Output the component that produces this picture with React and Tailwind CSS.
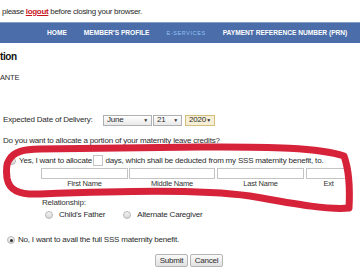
import React from "react";

function Radio({ checked }) {
  return (
    <span className="flex-none w-[8px] h-[8px] rounded-full border border-[#b8b8b8] bg-gradient-to-b from-[#f4f4f4] to-[#d6d6d6] flex items-center justify-center">
      {checked ? <span className="w-[3px] h-[3px] rounded-full bg-[#333]" /> : null}
    </span>
  );
}

function Select({ value, w, yellow }) {
  return (
    <div
      className={
        "h-[11px] flex items-center justify-between px-[3px] border text-[8px] tracking-[-0.2px] " +
        w +
        (yellow
          ? " border-[#d2bf7e] bg-[#f6efd6]"
          : " border-[#b0b0b0] bg-gradient-to-b from-[#ffffff] to-[#e9e9e9]")
      }
    >
      <span>{value}</span>
      <span className="text-[5px] leading-none">▼</span>
    </div>
  );
}

export default function App() {
  return (
    <div className="relative w-[360px] h-[279px] overflow-hidden bg-white text-[#2b2b2b] font-['Liberation_Sans',Arial,sans-serif]">
      {/* top line */}
      <div className="h-[22px] flex items-center pt-[1px] pl-[2px] text-[8px] tracking-[-0.3px] whitespace-nowrap">
        please&nbsp;<span className="font-bold text-[#c8141e] underline">logout</span>&nbsp;before closing your browser.
      </div>

      {/* nav */}
      <div className="h-[21px] bg-[#4b6daa] border-t border-[#86a0cc] flex items-center pl-[47px] gap-[17px] text-white font-bold text-[6.6px] whitespace-nowrap">
        <span>HOME</span>
        <span>MEMBER'S PROFILE</span>
        <span className="font-normal text-[5.5px] text-[#8fc3f2] tracking-[0.6px]">E-SERVICES</span>
        <span>PAYMENT REFERENCE NUMBER (PRN)</span>
      </div>

      <div className="h-[26px] flex items-center text-[10px] font-bold tracking-[-0.4px] text-[#111]">
        tion
      </div>
      <div className="h-[18px] flex items-center text-[7.5px] tracking-[-0.2px]">ANTE</div>

      <div className="mt-[27px] h-[12px] flex items-center pl-[3px] text-[8px] tracking-[-0.2px] whitespace-nowrap">
        <span className="flex-none w-[100px]">Expected Date of Delivery:</span>
        <Select value="June" w="w-[49px]" />
        <div className="ml-[1px]">
          <Select value="21" w="w-[29px]" />
        </div>
        <div className="ml-[3px]">
          <Select value="2020" w="w-[30px]" yellow />
        </div>
      </div>

      <div className="mt-[8px] h-[13px] flex items-center pl-[3px] text-[8px] tracking-[-0.2px] whitespace-nowrap">
        Do you want to allocate a portion of your maternity leave credits?
      </div>

      <div className="mt-[8px] h-[11px] flex items-center pl-[8px] text-[8px] tracking-[-0.2px] whitespace-nowrap">
        <Radio />
        <span className="ml-[3px]">Yes, I want to allocate</span>
        <span className="ml-[1.5px] flex-none w-[10px] h-[11px] border border-[#c4c4c4] bg-white" />
        <span className="ml-[2px]">days, which shall be deducted from my SSS maternity benefit, to.</span>
      </div>

      <div className="mt-[2px] h-[11px] flex pl-[41px]">
        <span className="flex-none w-[87px] h-[11px] border border-[#c4c4c4]" />
        <span className="ml-[1px] flex-none w-[86px] h-[11px] border border-[#c4c4c4]" />
        <span className="ml-[2px] flex-none w-[87px] h-[11px] border border-[#c4c4c4]" />
        <span className="ml-[2px] flex-none w-[45px] h-[11px] border border-[#c4c4c4]" />
      </div>
      <div className="h-[10px] flex items-center pl-[41px] text-[7.5px] tracking-[-0.2px] text-[#333] whitespace-nowrap">
        <span className="flex-none w-[87px] text-center">First Name</span>
        <span className="ml-[1px] flex-none w-[86px] text-center">Middle Name</span>
        <span className="ml-[2px] flex-none w-[87px] text-center">Last Name</span>
        <span className="ml-[2px] flex-none w-[45px] text-center">Ext</span>
      </div>

      <div className="mt-[8px] h-[11px] flex items-center pl-[42px] text-[8px] tracking-[-0.2px] text-[#333]">
        Relationship:
      </div>
      <div className="mt-[1px] h-[12px] flex items-center pl-[45px] text-[8px] tracking-[-0.2px] whitespace-nowrap">
        <Radio />
        <span className="ml-[6px]">Child's Father</span>
        <span className="ml-[18px]">
          <Radio />
        </span>
        <span className="ml-[6px]">Alternate Caregiver</span>
      </div>

      <div className="mt-[13px] h-[12px] flex items-center pl-[7px] text-[8px] tracking-[-0.2px] whitespace-nowrap">
        <Radio checked />
        <span className="ml-[3px]">No, I want to avail the full SSS maternity benefit.</span>
      </div>

      <div className="mt-[8px] h-[13px] flex pl-[155px] gap-[2px] text-[8px] tracking-[-0.2px]">
        <button className="w-[33px] h-[13px] border border-[#b5b5b5] rounded-[2px] bg-gradient-to-b from-[#fafafa] to-[#e2e2e2] flex items-center justify-center">
          Submit
        </button>
        <button className="w-[33px] h-[13px] border border-[#b5b5b5] rounded-[2px] bg-gradient-to-b from-[#fafafa] to-[#e2e2e2] flex items-center justify-center">
          Cancel
        </button>
      </div>

      {/* red marker annotation */}
      <svg className="absolute inset-0 pointer-events-none" width="360" height="279" viewBox="0 0 360 279">
        <path
          d="M 9 160 C 14 151, 24 149.5, 40 149 L 200 147 C 270 146.5, 320 148, 344 156 C 349 170, 350 190, 349 208 C 330 210, 300 205, 250 196 C 200 189, 120 191, 40 194 C 18 195, 9 190, 7 178 C 6 170, 6 164, 9 160 Z"
          fill="none"
          stroke="#d6233a"
          strokeWidth="7"
          strokeLinejoin="round"
          strokeLinecap="round"
        />
      </svg>
    </div>
  );
}
